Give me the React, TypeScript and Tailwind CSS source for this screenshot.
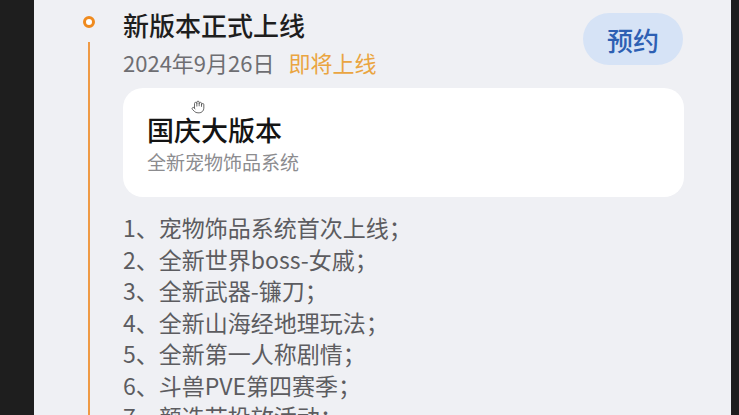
import { Hand } from "lucide-react";

const items = [
  "1、宠物饰品系统首次上线；",
  "2、全新世界boss-女戚；",
  "3、全新武器-镰刀；",
  "4、全新山海经地理玩法；",
  "5、全新第一人称剧情；",
  "6、斗兽PVE第四赛季；",
  "7、颜选节投放活动；",
];

export default function App() {
  return (
    <div
      className="flex h-[415px] w-[739px] overflow-hidden bg-[#1e1e1e]"
      style={{ fontFamily: '"Noto Sans CJK SC", "Noto Sans", sans-serif' }}
    >
      <div className="ml-[34px] flex w-[697px] bg-[#eff0f4]">
        {/* timeline rail */}
        <div className="flex w-[55px] shrink-0 flex-col items-end pt-[16px]">
          <div className="mr-[-6px] h-[12px] w-[12px] shrink-0 rounded-full border-[3px] border-[#ef8a1e] bg-white" />
          <div className="mt-[14px] mr-[-1px] w-[2px] flex-1 bg-[#ef9a45]" />
        </div>

        <div className="ml-[34px] flex w-[561px] shrink-0 flex-col">
          <div className="flex shrink-0 items-start justify-between pt-[7px]">
            <div className="flex flex-col">
              <div className="text-[26px] font-medium leading-[36px] text-[#1e1e1e]">新版本正式上线</div>
              <div className="mt-[6px] flex items-center gap-[14px] leading-[26px]">
                <span className="text-[22px] text-[#6e6e72]">2024年9月26日</span>
                <span className="text-[22px] text-[#eaa541]">即将上线</span>
              </div>
            </div>
            <div className="mt-[6px] mr-[1px] flex h-[52px] w-[100px] items-center justify-center rounded-full bg-[#d6e3f6] text-[26px] font-medium text-[#2d5fb3]">
              预约
            </div>
          </div>

          <div className="relative mt-[13px] flex h-[109px] shrink-0 flex-col rounded-[20px] bg-white pl-[24px] pt-[25px]">
            <Hand className="absolute left-[68px] top-[12px] h-[14px] w-[14px] text-[#555]" strokeWidth={1.5} />
            <div className="text-[27px] font-medium leading-[34px] text-[#141414]">国庆大版本</div>
            <div className="mt-[3px] text-[19px] leading-[24px] text-[#8c8c8f]">全新宠物饰品系统</div>
          </div>

          <div className="mt-[15px] flex shrink-0 flex-col">
            {items.map((t) => (
              <div key={t} className="shrink-0 text-[23px] leading-[31.5px] text-[#5c5c60]">
                {t}
              </div>
            ))}
          </div>
        </div>
      </div>
    </div>
  );
}
